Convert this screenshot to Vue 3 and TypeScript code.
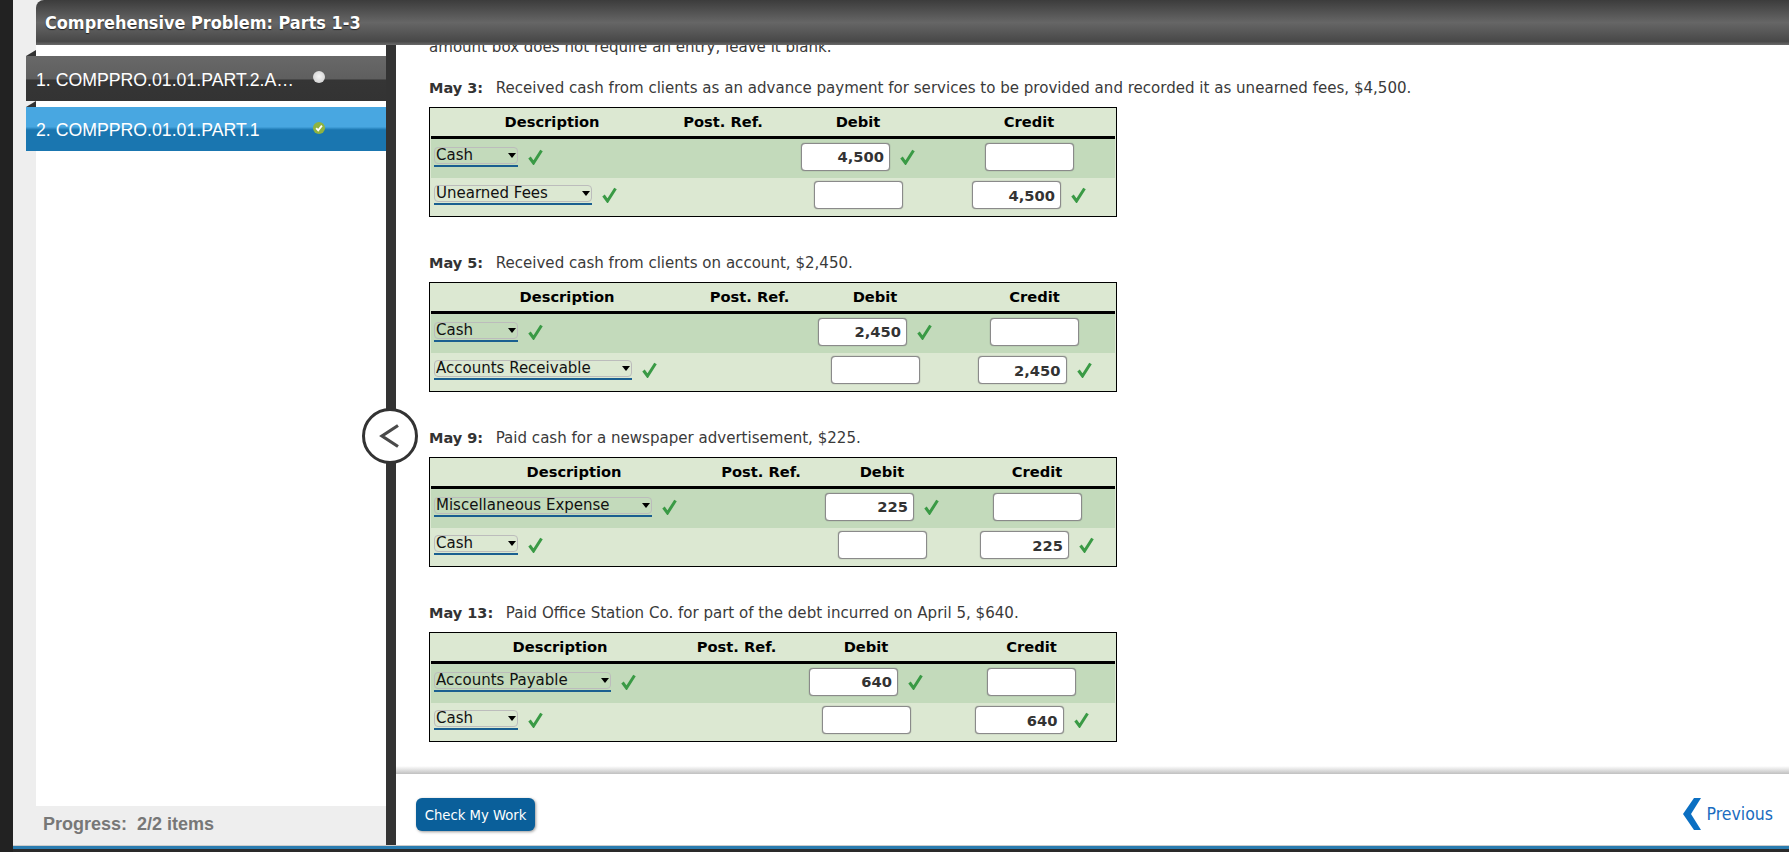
<script setup lang="ts">
interface Row { account: string; selectWidth: number; debit: string; credit: string }
interface Entry { date: string; text: string; cols: number[]; rows: Row[] }

const entries: Entry[] = [
  {
    date: 'May 3:',
    text: 'Received cash from clients as an advance payment for services to be provided and recorded it as unearned fees, $4,500.',
    cols: [242, 100, 170, 172],
    rows: [
      { account: 'Cash', selectWidth: 84, debit: '4,500', credit: '' },
      { account: 'Unearned Fees', selectWidth: 158, debit: '', credit: '4,500' }
    ]
  },
  {
    date: 'May 5:',
    text: 'Received cash from clients on account, $2,450.',
    cols: [272, 93, 158, 161],
    rows: [
      { account: 'Cash', selectWidth: 84, debit: '2,450', credit: '' },
      { account: 'Accounts Receivable', selectWidth: 198, debit: '', credit: '2,450' }
    ]
  },
  {
    date: 'May 9:',
    text: 'Paid cash for a newspaper advertisement, $225.',
    cols: [286, 88, 154, 156],
    rows: [
      { account: 'Miscellaneous Expense', selectWidth: 218, debit: '225', credit: '' },
      { account: 'Cash', selectWidth: 84, debit: '', credit: '225' }
    ]
  },
  {
    date: 'May 13:',
    text: 'Paid Office Station Co. for part of the debt incurred on April 5, $640.',
    cols: [258, 95, 164, 167],
    rows: [
      { account: 'Accounts Payable', selectWidth: 177, debit: '640', credit: '' },
      { account: 'Cash', selectWidth: 84, debit: '', credit: '640' }
    ]
  }
]
</script>

<template>
  <div class="page">
    <div class="rail"></div>
    <div class="main">
      <header class="title-bar">Comprehensive Problem: Parts 1-3</header>
      <div class="body">
        <aside class="side">
          <nav class="list">
            <div class="item item-dark">
              <span class="item-label">1. COMPPRO.01.01.PART.2.A…</span>
              <span class="dot"></span>
            </div>
            <div class="item item-blue">
              <span class="item-label">2. COMPPRO.01.01.PART.1</span>
              <span class="dot dot-ok">
                <svg viewBox="0 0 12 12" width="12" height="12"><path d="M3.2 6.2 5.2 8.4 8.9 3.6" fill="none" stroke="#fff" stroke-width="1.8" /></svg>
              </span>
            </div>
          </nav>
          <div class="progress">Progress:&nbsp; 2/2 items</div>
        </aside>
        <div class="divider">
          <button class="collapse" type="button" aria-label="Collapse">
            <svg viewBox="0 0 24 26" width="24" height="26"><path d="M20 2.5 4 13 20 23.5" fill="none" stroke="#4a4a4a" stroke-width="3.2" /></svg>
          </button>
        </div>
        <div class="content">
          <div class="scroll">
            <p class="cut">amount box does not require an entry, leave it blank.</p>
            <section v-for="e in entries" :key="e.date" class="entry">
              <p class="line"><b>{{ e.date }}</b>&nbsp; {{ e.text }}</p>
              <table class="journal">
                <colgroup>
                  <col v-for="(w, i) in e.cols" :key="i" :style="{ width: w + 'px' }" />
                </colgroup>
                <thead>
                  <tr>
                    <th>Description</th>
                    <th>Post. Ref.</th>
                    <th>Debit</th>
                    <th>Credit</th>
                  </tr>
                </thead>
                <tbody>
                  <tr v-for="(r, i) in e.rows" :key="i" :class="i === 0 ? 'odd' : 'even'">
                    <td class="desc">
                      <span class="sel" :style="{ width: r.selectWidth + 'px' }">
                        <select><option>{{ r.account }}</option></select>
                      </span>
                      <svg class="check" viewBox="0 0 15 16" width="15" height="16"><path d="M1.5 8.5 5.5 14 13.5 1.5" fill="none" stroke="#3a9a45" stroke-width="3" /></svg>
                    </td>
                    <td></td>
                    <td class="amt">
                      <input readonly :value="r.debit" />
                      <svg v-if="r.debit" class="check" viewBox="0 0 15 16" width="15" height="16"><path d="M1.5 8.5 5.5 14 13.5 1.5" fill="none" stroke="#3a9a45" stroke-width="3" /></svg>
                    </td>
                    <td class="amt">
                      <input readonly :value="r.credit" />
                      <svg v-if="r.credit" class="check" viewBox="0 0 15 16" width="15" height="16"><path d="M1.5 8.5 5.5 14 13.5 1.5" fill="none" stroke="#3a9a45" stroke-width="3" /></svg>
                    </td>
                  </tr>
                </tbody>
              </table>
            </section>
          </div>
          <footer class="foot">
            <button class="check-btn" type="button">Check My Work</button>
            <a class="prev">
              <svg viewBox="0 0 18 32" width="18" height="32"><path d="M18 0H11L0 16 11 32H18L8 16Z" fill="#0b6fc2" /></svg>
              <span>Previous</span>
            </a>
          </footer>
        </div>
      </div>
      <div class="bottom"></div>
    </div>
  </div>
</template>

<style>
html, body { margin: 0; overflow: hidden; }
</style>

<style scoped>
.page {
  display: flex;
  width: 1789px;
  height: 852px;
  background: #2a2a2a;
  overflow: hidden;
  font-family: "DejaVu Sans", Verdana, sans-serif;
}
.rail { width: 13px; background: #222; flex: none; }
.main { flex: 1; display: flex; flex-direction: column; min-width: 0; background: #eee; }
.title-bar {
  margin-left: 23px;
  height: 45px;
  line-height: 45px;
  padding-left: 9px;
  box-sizing: border-box;
  border-top-left-radius: 8px;
  background: linear-gradient(#3c3c3c 0, #666 50%, #484848 92%, #6a6a6a 100%);
  color: #fff;
  font-family: "DejaVu Sans Condensed", "DejaVu Sans", sans-serif;
  font-weight: 700;
  font-size: 17.9px;
  text-shadow: 0 1px 1px #222;
  flex: none;
}
.body { flex: 1; display: flex; min-height: 0; }
.side { width: 373px; flex: none; display: flex; flex-direction: column; background: #eee; }
.list { flex: 1; margin-left: 23px; background: #fff; padding-top: 11px; }
.item {
  position: relative;
  height: 45px;
  margin-left: -10px;
  margin-bottom: 6px;
  display: flex;
  align-items: center;
  color: #fff;
  font: 17.7px/1 "Liberation Sans", Arial, sans-serif;
}
.item::before {
  content: "";
  position: absolute;
  left: 0;
  top: -6px;
  border-bottom: 6px solid #333;
  border-left: 10px solid transparent;
}
.item-label { margin-left: 10px; width: 277px; white-space: nowrap; position: relative; top: 2px; }
.item-dark { background: linear-gradient(#686868 0, #5f5f5f 50%, #353535 54%, #333 100%); }
.item-blue { background: linear-gradient(#48a7e1 0, #48a7e1 45%, #1a76b0 52%, #1a76b0 100%); height: 44px; }
.dot {
  width: 12px;
  height: 12px;
  margin-top: -3px;
  border-radius: 50%;
  background: radial-gradient(circle at 50% 45%, #f4f4f4, #c8c8c8);
  display: flex;
  align-items: center;
  justify-content: center;
}
.dot-ok { background: #8fb340; }
.progress {
  height: 39px;
  padding-left: 30px;
  font: 700 18px/36px "Liberation Sans", Arial, sans-serif;
  color: #777;
}
.divider { width: 10px; flex: none; background: #333; position: relative; }
.collapse {
  position: absolute;
  left: -24px;
  top: 363px;
  width: 56px;
  height: 56px;
  box-sizing: border-box;
  border: 3px solid #333;
  border-radius: 50%;
  background: #fff;
  padding: 0;
  display: flex;
  align-items: center;
  justify-content: center;
}
.content { flex: 1; display: flex; flex-direction: column; min-width: 0; background: #fff; }
.scroll {
  flex: 1;
  min-height: 0;
  overflow: hidden;
  padding-left: 33px;
  background: linear-gradient(to bottom, #fff calc(100% - 8px), #c0c0c0 100%);
  color: #3a3a3a;
  font-size: 15.05px;
}
.cut { margin: -6px 0 0; height: 16px; line-height: 16px; white-space: nowrap; }
.entry { height: 175px; }
.entry:first-of-type { margin-top: 24px; }
.line { margin: 0; padding-top: 1px; height: 27px; line-height: 16px; white-space: nowrap; }
.line b { color: #333; font-size: 14.5px; margin-right: 3px; }
.journal {
  width: 688px;
  table-layout: fixed;
  box-sizing: border-box;
  border: 1px solid #000;
  border-collapse: separate;
  border-spacing: 0;
  padding: 0 1px;
  background: #dce8d2;
  color: #000;
  font-size: 14.7px;
}
th {
  height: 27px;
  padding: 0 0 1px;
  border-bottom: 3px solid #000;
  font-weight: 700;
  box-sizing: content-box;
}
td { padding: 0 0 3px; height: 35.5px; box-sizing: content-box; }
.odd td { background: #c3dabb; }
.even td { background: #dce8d2; }
.desc { white-space: nowrap; padding-left: 3px; }
.amt { text-align: center; white-space: nowrap; }
.sel {
  position: relative;
  display: inline-block;
  vertical-align: middle;
  box-sizing: border-box;
  border-bottom: 2px solid #1a5f90;
  height: 20px;
}
.sel::after {
  content: "";
  position: absolute;
  right: 2px;
  top: 6px;
  border-top: 5px solid #000;
  border-left: 4px solid transparent;
  border-right: 4px solid transparent;
}
select {
  appearance: none;
  display: block;
  width: 100%;
  height: 17px;
  box-sizing: border-box;
  margin: 0;
  padding: 0 0 0 1px;
  border: 1px solid #bcbcbc;
  border-radius: 4px;
  background: transparent;
  color: #111;
  font: 15px/15px "DejaVu Sans", Verdana, sans-serif;
}
.check { vertical-align: middle; margin-left: 10px; }
input {
  width: 89px;
  height: 28px;
  box-sizing: border-box;
  vertical-align: middle;
  padding: 0 5px;
  border: 1px solid #8a8a8a;
  border-radius: 4px;
  background: #fff;
  box-shadow: 0 0 1px #666;
  text-align: right;
  color: #333;
  font: 700 14.7px "DejaVu Sans", Verdana, sans-serif;
}
.foot {
  height: 71px;
  flex: none;
  background: #fff;
  display: flex;
  align-items: flex-start;
  justify-content: space-between;
  padding: 24px 16px 0 20px;
  box-sizing: border-box;
}
.check-btn {
  width: 119px;
  height: 33px;
  padding: 0;
  border: 0;
  border-radius: 6px;
  background: #0a5f9a;
  box-shadow: 1px 1px 3px #999;
  color: #fff;
  font: 14.7px "DejaVu Sans Condensed", "Open Sans", sans-serif;
}
.prev {
  display: flex;
  align-items: center;
  gap: 6px;
  color: #1a6cc0;
  font: 17.5px "DejaVu Sans Condensed", "Open Sans", sans-serif;
}
.bottom {
  height: 7px;
  flex: none;
  background: linear-gradient(#ccc 0, #ccc 1px, #2a7cb0 1px, #2a7cb0 4px, #2a2a2a 4px);
}
</style>
